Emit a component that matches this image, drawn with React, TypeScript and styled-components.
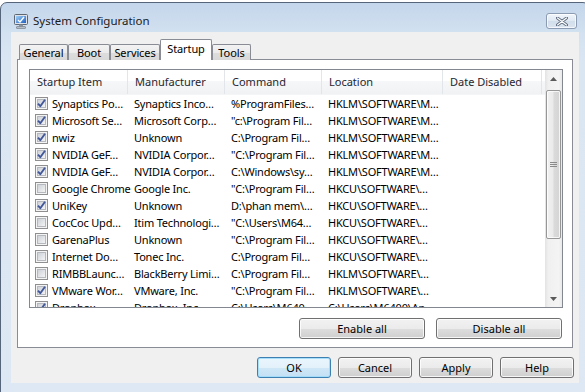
import * as React from 'react';
import styled, { createGlobalStyle } from 'styled-components';

interface StartupRow {
    checked: boolean;
    item: string;
    maker: string;
    command: string;
    location: string;
}

const rows: StartupRow[] = [
    { checked: true, item: 'Synaptics Po…', maker: 'Synaptics Inco…', command: '%ProgramFiles…', location: 'HKLM\\SOFTWARE\\M…' },
    { checked: true, item: 'Microsoft Se…', maker: 'Microsoft Corp…', command: '"c:\\Program Fil…', location: 'HKLM\\SOFTWARE\\M…' },
    { checked: true, item: 'nwiz', maker: 'Unknown', command: 'C:\\Program Fil…', location: 'HKLM\\SOFTWARE\\M…' },
    { checked: true, item: 'NVIDIA GeF…', maker: 'NVIDIA Corpor…', command: '"C:\\Program Fil…', location: 'HKLM\\SOFTWARE\\M…' },
    { checked: true, item: 'NVIDIA GeF…', maker: 'NVIDIA Corpor…', command: 'C:\\Windows\\sy…', location: 'HKLM\\SOFTWARE\\M…' },
    { checked: false, item: 'Google Chrome', maker: 'Google Inc.', command: '"C:\\Program Fil…', location: 'HKCU\\SOFTWARE\\…' },
    { checked: true, item: 'UniKey', maker: 'Unknown', command: 'D:\\phan mem\\…', location: 'HKCU\\SOFTWARE\\…' },
    { checked: false, item: 'CocCoc Upd…', maker: 'Itim Technologi…', command: '"C:\\Users\\M64…', location: 'HKCU\\SOFTWARE\\…' },
    { checked: false, item: 'GarenaPlus', maker: 'Unknown', command: '"C:\\Program Fil…', location: 'HKCU\\SOFTWARE\\…' },
    { checked: false, item: 'Internet Do…', maker: 'Tonec Inc.', command: 'C:\\Program Fil…', location: 'HKCU\\SOFTWARE\\…' },
    { checked: false, item: 'RIMBBLaunc…', maker: 'BlackBerry Limi…', command: 'C:\\Program Fil…', location: 'HKLM\\SOFTWARE\\…' },
    { checked: true, item: 'VMware Wor…', maker: 'VMware, Inc.', command: '"C:\\Program Fil…', location: 'HKLM\\SOFTWARE\\…' },
    { checked: true, item: 'Dropbox', maker: 'Dropbox, Inc.', command: 'C:\\Users\\M640…', location: 'C:\\Users\\M6400\\Ap…' },
];

const columns = [
    { id: 'item', label: 'Startup Item', width: 98 },
    { id: 'maker', label: 'Manufacturer', width: 97 },
    { id: 'command', label: 'Command', width: 97 },
    { id: 'location', label: 'Location', width: 121 },
    { id: 'date', label: 'Date Disabled', width: 99 },
];

const tabs = [
    { id: 'general', label: 'General', width: 49 },
    { id: 'boot', label: 'Boot', width: 42 },
    { id: 'services', label: 'Services', width: 50 },
    { id: 'startup', label: 'Startup', width: 52 },
    { id: 'tools', label: 'Tools', width: 39 },
];

const GlobalStyle = createGlobalStyle`
    html, body {
        margin: 0;
        padding: 0;
        background: #ffffff;
        overflow: hidden;
    }
    body {
        font-family: "Noto Sans", "Open Sans", sans-serif;
        font-size: 11px;
        color: #000;
    }
`;

const Window = styled.div`
    margin-top: 2px;
    width: 590px;
    height: 400px;
    box-sizing: border-box;
    border: 1px solid #56657a;
    border-radius: 7px 7px 0 0;
    padding: 0 10px 9px 10px;
    background: linear-gradient(#c3d6eb 0px, #d3e1f0 30px, #dbe6f3 60px, #dde8f4 100%);
    display: flex;
    flex-direction: column;
`;

const TitleBar = styled.div`
    height: 29px;
    box-sizing: border-box;
    padding-top: 10px;
    display: flex;
    align-items: flex-start;
`;

const AppIcon = styled.svg`
    width: 16px;
    height: 16px;
    margin-left: 2px;
`;

const Title = styled.span`
    margin-left: 4px;
    line-height: 16px;
    font-size: 11.5px;
    color: #1a1a1a;
    flex: 1;
`;

const CloseButton = styled.div`
    width: 31px;
    height: 16px;
    box-sizing: border-box;
    margin-right: 2px;
    border: 1px solid #8b9bb1;
    border-radius: 3px;
    background: linear-gradient(#f1f5fa, #dfe8f2 50%, #d2deeb 51%, #dbe5f0);
    box-shadow: inset 0 0 0 1px rgba(255, 255, 255, 0.7);
    display: flex;
    align-items: center;
    justify-content: center;
`;

const Client = styled.div`
    height: 351px;
    width: 568px;
    box-sizing: border-box;
    background: #f0f0f0;
    padding: 7px 6px 0 6px;
    display: flex;
    flex-direction: column;
`;

const TabStrip = styled.div`
    height: 21px;
    display: flex;
    align-items: flex-end;
    padding-left: 2px;
    margin-bottom: -1px;
    position: relative;
    z-index: 1;
`;

const Tab = styled.div<{ $w: number; $active?: boolean }>`
    width: ${p => p.$w}px;
    height: ${p => (p.$active ? 21 : 16)}px;
    box-sizing: border-box;
    border: 1px solid #898c95;
    border-bottom: none;
    border-radius: 2px 2px 0 0;
    background: ${p => (p.$active ? '#ffffff' : 'linear-gradient(#f3f3f3, #ebebeb 50%, #dddddd 51%, #d8d8d8)')};
    display: flex;
    align-items: center;
    justify-content: center;
    line-height: 14px;
    padding-bottom: ${p => (p.$active ? 2 : 0)}px;
    letter-spacing: -0.1px;
    color: #000;
`;

const TabPage = styled.div`
    width: 556px;
    height: 289px;
    box-sizing: border-box;
    border: 1px solid #898c95;
    background: #ffffff;
    padding: 9px 9px 0 11px;
    display: flex;
    flex-direction: column;
`;

const ListView = styled.div`
    width: 534px;
    height: 239px;
    box-sizing: border-box;
    border: 1px solid #828790;
    display: flex;
    overflow: hidden;
`;

const ListContent = styled.div`
    flex: 1;
    display: flex;
    flex-direction: column;
    overflow: hidden;
`;

const HeaderRow = styled.div`
    height: 25px;
    flex: none;
    display: flex;
    background: linear-gradient(#ffffff, #ffffff 45%, #f6f7f8 46%, #f1f2f4);
    border-bottom: 1px solid #f4f5f7;
    box-sizing: border-box;
`;

const HeaderCell = styled.div<{ $w: number }>`
    width: ${p => p.$w}px;
    flex: none;
    box-sizing: border-box;
    border-right: 1px solid #e2e6ea;
    padding-left: 7px;
    display: flex;
    align-items: center;
    padding-bottom: 2px;
    color: #1f2630;
    white-space: nowrap;
    overflow: hidden;
`;

const Body = styled.div`
    flex: 1;
    overflow: hidden;
`;

const Row = styled.div`
    height: 17px;
    display: flex;
    align-items: center;
`;

const Cell = styled.div<{ $w: number }>`
    width: ${p => p.$w}px;
    flex: none;
    box-sizing: border-box;
    padding-left: 6px;
    display: flex;
    align-items: center;
    white-space: nowrap;
    line-height: 17px;
    letter-spacing: -0.2px;
`;

const CheckBox = styled.svg`
    width: 13px;
    height: 13px;
    flex: none;
    margin: 0 4px 0 -1px;
`;

const ScrollBar = styled.div`
    width: 17px;
    flex: none;
    display: flex;
    flex-direction: column;
    background: linear-gradient(90deg, #e3e3e3, #f0f0f0 20%, #f4f4f4 80%, #e9e9e9);
`;

const ArrowBox = styled.div`
    height: 17px;
    flex: none;
    display: flex;
    align-items: center;
    justify-content: center;
`;

const Thumb = styled.div`
    height: 149px;
    margin: 3px 1px 0 1px;
    box-sizing: border-box;
    border: 1px solid #979797;
    border-radius: 2px;
    background: linear-gradient(90deg, #f2f2f2, #eaeaea 45%, #dadada 55%, #d4d4d4);
    box-shadow: inset 0 0 0 1px rgba(255, 255, 255, 0.75);
    display: flex;
    align-items: center;
    justify-content: center;
`;

const Track = styled.div`
    flex: 1;
`;

const ButtonRow = styled.div<{ $top: number; $gap: number; $right: number }>`
    display: flex;
    justify-content: flex-end;
    gap: ${p => p.$gap}px;
    margin-top: ${p => p.$top}px;
    margin-right: ${p => p.$right}px;
`;

const Button = styled.div<{ $w: number; $default?: boolean }>`
    width: ${p => p.$w}px;
    height: 21px;
    box-sizing: border-box;
    border: 1px solid ${p => (p.$default ? '#3c7fb1' : '#707070')};
    border-radius: 3px;
    background: ${p =>
        p.$default
            ? 'linear-gradient(#eaf6fd, #e3f1fb 50%, #cfe7f7 51%, #c4e0f4)'
            : 'linear-gradient(#f2f2f2, #ebebeb 50%, #dddddd 51%, #cfcfcf)'};
    box-shadow: inset 0 0 0 1px ${p => (p.$default ? 'rgba(160, 220, 250, 0.9)' : 'rgba(255, 255, 255, 0.8)')};
    display: flex;
    align-items: center;
    justify-content: center;
    color: #000;
    line-height: 14px;
`;

const Check: React.FC<{ checked: boolean }> = ({ checked }) => (
    <CheckBox viewBox="0 0 13 13">
        <defs>
            <linearGradient id="cbFill" x1="0" y1="0" x2="1" y2="1">
                <stop offset="0" stopColor="#cbcfd5" />
                <stop offset="1" stopColor="#f6f6f6" />
            </linearGradient>
        </defs>
        <rect x="0.5" y="0.5" width="12" height="12" fill="#f4f4f4" stroke="#8f8f8f" />
        <rect x="2.5" y="2.5" width="8" height="8" fill="url(#cbFill)" stroke="#b5b9bf" />
        {checked && (
            <path d="M3 6.6 L5.3 9.2 L10 2.8" fill="none" stroke="#41579a" strokeWidth="1.9" strokeLinejoin="round" />
        )}
    </CheckBox>
);

const App: React.FC = () => {
    return (
        <>
            <GlobalStyle />
            <Window>
                <TitleBar>
                    <AppIcon viewBox="0 0 16 16">
                        <defs>
                            <linearGradient id="scr" x1="0" y1="0" x2="1" y2="1">
                                <stop offset="0" stopColor="#9fd0f7" />
                                <stop offset="1" stopColor="#1e5fc2" />
                            </linearGradient>
                        </defs>
                        <rect x="1.5" y="1.5" width="13" height="10" rx="1" fill="#dfe3e8" stroke="#5d6672" />
                        <rect x="3" y="3" width="10" height="7" fill="url(#scr)" />
                        <path d="M5 7 L7 9 L11 4" fill="none" stroke="#ffffff" strokeWidth="1.4" />
                        <rect x="6" y="11.5" width="4" height="2" fill="#8b939e" />
                        <rect x="3.5" y="13.5" width="9" height="2" rx="0.5" fill="#b7bdc5" stroke="#6c7480" strokeWidth="0.6" />
                    </AppIcon>
                    <Title>System Configuration</Title>
                    <CloseButton>
                        <svg width="12" height="9" viewBox="0 0 12 9">
                            <path d="M1.5 1 L10.5 8 M10.5 1 L1.5 8" stroke="#5f6c7e" strokeWidth="3" strokeLinecap="round" />
                            <path d="M1.5 1 L10.5 8 M10.5 1 L1.5 8" stroke="#ffffff" strokeWidth="1.2" strokeLinecap="round" />
                        </svg>
                    </CloseButton>
                </TitleBar>
                <Client>
                    <TabStrip>
                        {tabs.map(tab => (
                            <Tab key={tab.id} $w={tab.width} $active={tab.id === 'startup'}>
                                {tab.label}
                            </Tab>
                        ))}
                    </TabStrip>
                    <TabPage>
                        <ListView>
                            <ListContent>
                                <HeaderRow>
                                    {columns.map(col => (
                                        <HeaderCell key={col.id} $w={col.width}>
                                            {col.label}
                                        </HeaderCell>
                                    ))}
                                </HeaderRow>
                                <Body>
                                    {rows.map((row, i) => (
                                        <Row key={i}>
                                            <Cell $w={columns[0].width}>
                                                <Check checked={row.checked} />
                                                {row.item}
                                            </Cell>
                                            <Cell $w={columns[1].width}>{row.maker}</Cell>
                                            <Cell $w={columns[2].width}>{row.command}</Cell>
                                            <Cell $w={columns[3].width}>{row.location}</Cell>
                                            <Cell $w={columns[4].width} />
                                        </Row>
                                    ))}
                                </Body>
                            </ListContent>
                            <ScrollBar>
                                <ArrowBox>
                                    <svg width="7" height="4" viewBox="0 0 7 4">
                                        <path d="M0 4 L3.5 0 L7 4 Z" fill="#5a5a5a" />
                                    </svg>
                                </ArrowBox>
                                <Thumb>
                                    <svg width="7" height="6" viewBox="0 0 7 6">
                                        <path d="M0 0.5 H7 M0 2.5 H7 M0 4.5 H7" stroke="#8a8a8a" strokeWidth="1" />
                                    </svg>
                                </Thumb>
                                <Track />
                                <ArrowBox>
                                    <svg width="7" height="4" viewBox="0 0 7 4">
                                        <path d="M0 0 L3.5 4 L7 0 Z" fill="#5a5a5a" />
                                    </svg>
                                </ArrowBox>
                            </ScrollBar>
                        </ListView>
                        <ButtonRow $top={10} $gap={11} $right={1}>
                            <Button $w={126}>Enable all</Button>
                            <Button $w={126}>Disable all</Button>
                        </ButtonRow>
                    </TabPage>
                    <ButtonRow $top={9} $gap={7} $right={-1}>
                        <Button $w={74} $default>OK</Button>
                        <Button $w={74}>Cancel</Button>
                        <Button $w={74}>Apply</Button>
                        <Button $w={74}>Help</Button>
                    </ButtonRow>
                </Client>
            </Window>
        </>
    );
};

export default App;
